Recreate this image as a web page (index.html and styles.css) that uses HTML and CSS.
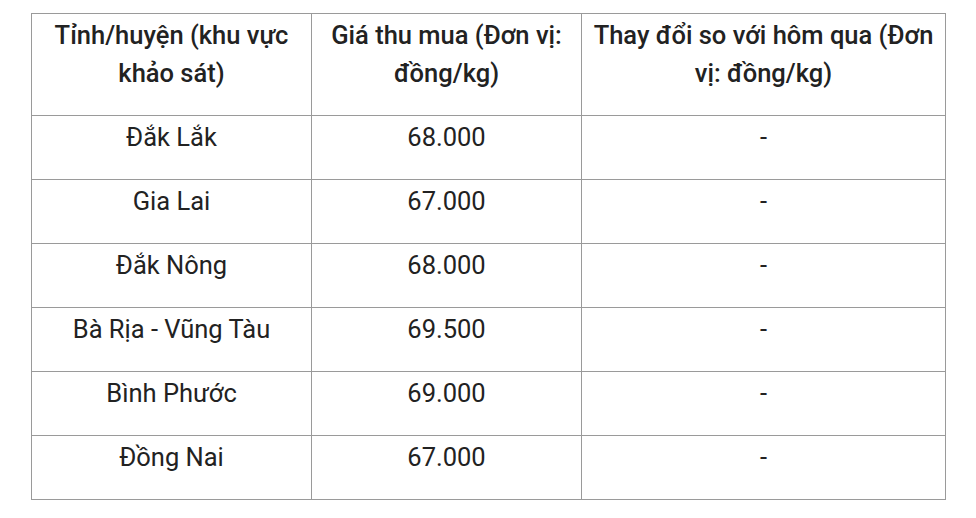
FILE: index.html
```html
<!DOCTYPE html>
<html lang="vi">
<head>
<meta charset="utf-8">
<link rel="stylesheet" href="styles.css">
</head>
<body>
<div class="wrap">
<table class="price">
<colgroup><col class="c1"><col class="c2"><col class="c3"></colgroup>
<thead>
<tr><th>Tỉnh/huyện (khu vực khảo sát)</th><th>Giá thu mua (Đơn vị: đồng/kg)</th><th>Thay đổi so với hôm qua (Đơn vị: đồng/kg)</th></tr>
</thead>
<tbody>
<tr><td>Đắk Lắk</td><td>68.000</td><td>-</td></tr>
<tr><td>Gia Lai</td><td>67.000</td><td>-</td></tr>
<tr><td>Đắk Nông</td><td>68.000</td><td>-</td></tr>
<tr><td>Bà Rịa - Vũng Tàu</td><td>69.500</td><td>-</td></tr>
<tr><td>Bình Phước</td><td>69.000</td><td>-</td></tr>
<tr><td>Đồng Nai</td><td>67.000</td><td>-</td></tr>
</tbody>
</table>
</div>
</body>
</html>
```
FILE: styles.css
```css
html, body {
  margin: 0;
  padding: 0;
  background: #fff;
}
.wrap {
  padding: 13px 0 0 31px;
}
.price {
  border-collapse: collapse;
  table-layout: fixed;
  width: 914px;
  font-family: Roboto, "Liberation Sans", sans-serif;
  font-size: 25.5px;
  line-height: 38px;
  color: #222;
}
.c1 { width: 280px; }
.c2 { width: 270px; }
.c3 { width: 364px; }
.price th,
.price td {
  border: 1px solid #9a9a9a;
  padding: 2px 8px 23px;
  text-align: center;
  vertical-align: top;
}
.price th {
  font-weight: 500;
}
```
